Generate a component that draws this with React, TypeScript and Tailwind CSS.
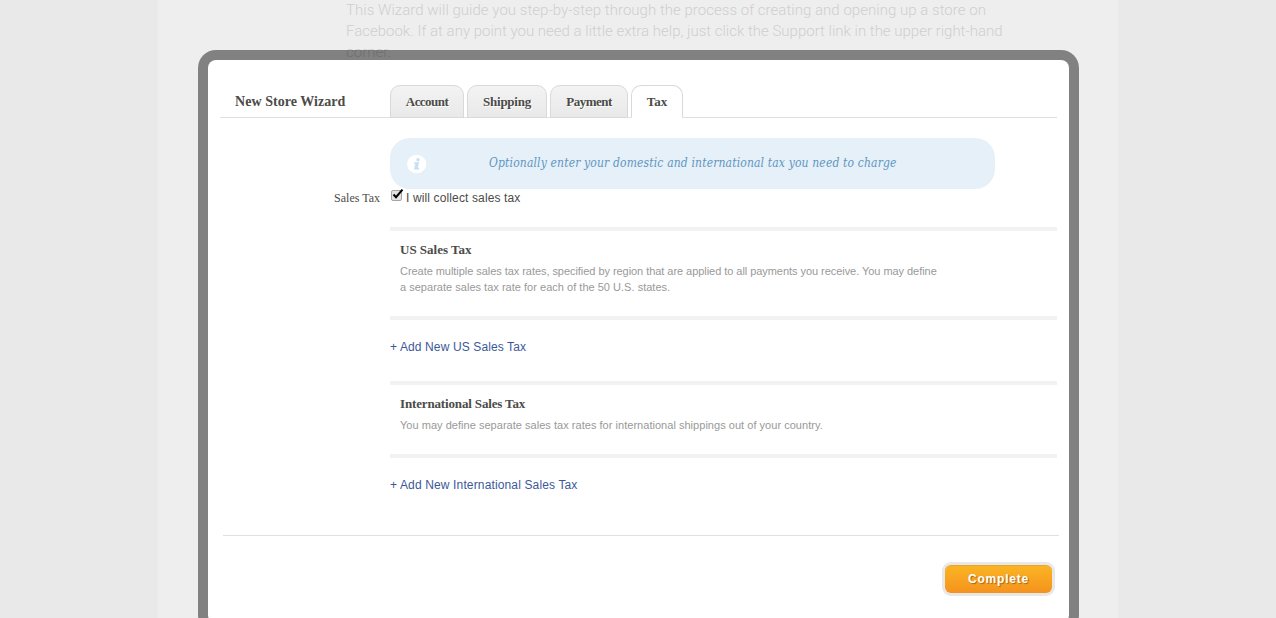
import { useState } from "react";

const serif = "font-['Liberation_Serif',serif]";

const tabs = [
  { label: "Account", width: "w-[74px]", spacing: "tracking-[-0.55px]" },
  { label: "Shipping", width: "w-[80px]", spacing: "tracking-[-0.25px]" },
  { label: "Payment", width: "w-[78px]", spacing: "tracking-[-0.5px]" },
  { label: "Tax", width: "w-[52px]", spacing: "tracking-[0px]" },
];

function Tabs() {
  return (
    <div className="flex h-[33px] gap-[3px]">
      {tabs.map((tab) => (
        <button
          key={tab.label}
          className={`${tab.width} ${tab.spacing} ${serif} h-[33px] rounded-t-[10px] border border-[#d9d9d9] pt-px text-[13px] font-bold whitespace-nowrap text-[#4b4b48] [text-shadow:1px_1px_0_#fff] ${
            tab.label === "Tax"
              ? "border-b-white bg-white"
              : "bg-linear-to-b from-[#f3f3f3] to-[#e9e9e9]"
          }`}
        >
          {tab.label}
        </button>
      ))}
    </div>
  );
}

function Notice() {
  return (
    <div className="flex h-[51px] w-[605px] items-center rounded-[20px] bg-[#e5f0f9] pl-[17px]">
      <svg width="20" height="20" viewBox="0 0 20 20" className="shrink-0">
        <ellipse cx="9.7" cy="10" rx="9.7" ry="9.2" fill="#fff" />
        <circle cx="11" cy="5.8" r="1.7" fill="#c7dff5" />
        <path d="M7.2 8.2h4.9l-1.3 5.6h1.4l-.4 1.6H6.9l1.5-5.6H6.9z" fill="#c7dff5" />
      </svg>
      <p className="ml-[62px] pb-px font-['DejaVu_Serif_Condensed','DejaVu_Serif',serif] text-[12px] tracking-[0.15px] whitespace-nowrap text-[#6195bf] italic">
        Optionally enter your domestic and international tax you need to charge
      </p>
    </div>
  );
}

interface TaxSectionProps {
  title: string;
  titleSpacing: string;
  height: string;
  lines: { text: string; spacing: string }[];
}

function TaxSection({ title, titleSpacing, lines, height }: TaxSectionProps) {
  return (
    <section className={`${height} border-y-4 border-[#f2f2f2] pt-[10px] pl-[10px]`}>
      <h2 className={`${serif} ${titleSpacing} h-[18px] text-[13px] leading-[18px] font-bold text-[#4b4b48]`}>{title}</h2>
      <div className="mt-[4px] text-[11px] leading-4 whitespace-nowrap text-[#999]">
        {lines.map((line) => (
          <p key={line.text} className={line.spacing}>
            {line.text}
          </p>
        ))}
      </div>
    </section>
  );
}

export default function App() {
  const [collect, setCollect] = useState(true);
  return (
    <div className="grid h-[618px] w-[1276px] overflow-hidden bg-[#e9e9e9] font-['Liberation_Sans',sans-serif]">
      <div className="col-start-1 row-start-1 ml-[157px] h-[618px] w-[962px] border-x border-[#ebebeb] bg-[#eee]">
        <p className="ml-[188px] w-[670px] font-['Roboto','Liberation_Sans',sans-serif] text-[15px] leading-[21px] font-light whitespace-nowrap text-[#cfcfcf]">
          <span className="tracking-[0.03px]">This Wizard will guide you step-by-step through the process of creating and opening up a store on</span>
          <br />
          <span className="tracking-[0px]">Facebook. If at any point you need a little extra help, just click the Support link in the upper right-hand</span>
          <br />
          corner.
        </p>
      </div>
      <div className="z-10 col-start-1 row-start-1 mt-[50px] ml-[198px] h-[583px] w-[881px] rounded-[18px] bg-black/46 p-[10px]">
        <main className="h-[563px] rounded-[8px] bg-white pt-[25px] text-[#4b4b48]">
          <header className="ml-[12px] flex h-[33px] w-[837px] border-b border-[#e0e0e0]">
            <h1 className={`${serif} w-[170px] pt-[7px] pl-[15px] text-[14px] leading-[20px] font-bold tracking-[0.05px] whitespace-nowrap`}>
              New Store Wizard
            </h1>
            <Tabs />
          </header>
          <div className="mt-[20px] ml-[182px] w-[667px]">
            <Notice />
          </div>
          <div className="flex h-[38px]">
            <span className={`${serif} w-[172px] text-right text-[12px] leading-[18px]`}>Sales Tax</span>
            <label className="ml-[11px] flex text-[12px] leading-[18px]">
              <button role="checkbox" aria-checked={collect} onClick={() => setCollect(!collect)} className="mr-[2px] h-[14px] w-[13px]">
                <svg width="13" height="14" viewBox="0 0 13 14">
                  <rect x=".5" y="1.5" width="10" height="10" rx="1.5" fill="#e3e3e3" stroke="#a5a5a5" />
                  {collect && <path d="M2.5 5.5 5 8.2 11.5.6" fill="none" stroke="#000" strokeWidth="2" />}
                </svg>
              </button>
              <span className="tracking-[0.13px]">I will collect sales tax</span>
            </label>
          </div>
          <div className="ml-[182px] w-[667px]">
            <TaxSection
              title="US Sales Tax"
              titleSpacing="tracking-normal"
              height="h-[93px]"
              lines={[
                {
                  text: "Create multiple sales tax rates, specified by region that are applied to all payments you receive. You may define",
                  spacing: "tracking-[-0.05px]",
                },
                { text: "a separate sales tax rate for each of the 50 U.S. states.", spacing: "tracking-[0.02px]" },
              ]}
            />
            <a className="mt-[18px] block h-[43px] text-[12px] leading-[18px] tracking-[0.12px] text-[#3b5998]">+ Add New US Sales Tax</a>
            <TaxSection
              title="International Sales Tax"
              titleSpacing="tracking-[-0.15px]"
              height="h-[77px]"
              lines={[
                {
                  text: "You may define separate sales tax rates for international shippings out of your country.",
                  spacing: "tracking-[0.03px]",
                },
              ]}
            />
            <a className="mt-[18px] block h-[59px] text-[12px] leading-[18px] tracking-[0.14px] text-[#3b5998]">+ Add New International Sales Tax</a>
          </div>
          <footer className="ml-[15px] flex w-[836px] justify-end border-t border-[#e0e0e0] pt-[26px] pr-[4px]">
            <button className="h-[34px] w-[113px] rounded-[9px] bg-[#e8e8e8] p-[3px]">
              <span className="block h-[28px] rounded-[6px] border-t border-[#eaa52b] bg-linear-to-b from-[#fab423] to-[#f5921e] text-[12px] leading-[26px] font-bold tracking-[0.8px] text-white [text-shadow:1px_1px_1px_#a86710]">
                Complete
              </span>
            </button>
          </footer>
        </main>
      </div>
    </div>
  );
}
